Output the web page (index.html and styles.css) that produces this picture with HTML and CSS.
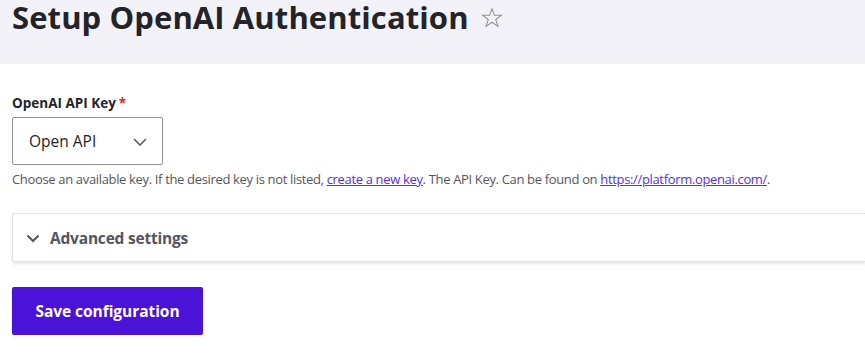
FILE: index.html
```html
<!DOCTYPE html>
<html lang="en">
<head>
<meta charset="utf-8">
<title>Setup OpenAI Authentication</title>
<link rel="stylesheet" href="styles.css">
</head>
<body>
<header class="page-header">
  <h1 class="page-title">Setup OpenAI Authentication <span class="star" aria-hidden="true"><svg width="22" height="22" viewBox="0 0 24 24"><path d="M12 1.8l2.6 7.3h7.7l-6.2 4.6 2.3 7.4L12 16.6l-6.4 4.5 2.3-7.4-6.2-4.6h7.7z" fill="none" stroke="#8d8d95" stroke-width="1.1" stroke-linejoin="miter"/></svg></span></h1>
</header>
<main class="content">
  <form class="form">
    <div class="form-item">
      <label class="form-label">OpenAI API Key<span class="required">*</span></label>
      <div class="select">
        <span class="select-value">Open API</span>
        <svg class="select-chevron" width="14" height="8" viewBox="0 0 14 8"><path d="M1 1l6 6 6-6" fill="none" stroke="#545560" stroke-width="1.5"/></svg>
      </div>
      <div class="description">Choose an available key. If the desired key is not listed, <a href="#">create a new key</a>. The API Key. Can be found on <a href="#">https://platform.openai.com/</a>.</div>
    </div>
    <details class="details">
      <summary class="summary"><svg class="summary-chevron" width="14" height="9" viewBox="0 0 14 9"><path d="M1.5 1.5l5.5 5.5 5.5-5.5" fill="none" stroke="#545560" stroke-width="2"/></svg>Advanced settings</summary>
    </details>
    <div class="actions">
      <button type="button" class="button">Save configuration</button>
    </div>
  </form>
</main>
</body>
</html>
```
FILE: styles.css
```css
html, body {
  margin: 0;
  padding: 0;
  background: #ffffff;
  font-family: "Open Sans", "Noto Sans", sans-serif;
  color: #222330;
}
.page-header {
  background: #f4f2f9;
  height: 64px;
  padding: 0 12px;
  box-sizing: border-box;
}
.page-title {
  margin: 0;
  font-size: 31px;
  line-height: 34px;
  font-weight: 700;
  letter-spacing: 0.1px;
  color: #232429;
  display: flex;
  align-items: center;
  gap: 12px;
}
.star {
  display: flex;
  align-items: center;
  margin-top: 1px;
}
.content {
  padding: 30px 0 0 12px;
}
.form-item {
  display: flex;
  flex-direction: column;
  align-items: flex-start;
}
.form-label {
  font-size: 13.5px;
  font-weight: 700;
  line-height: 18px;
  color: #232429;
  letter-spacing: 0px;
  margin-bottom: 5px;
}
.required {
  color: #dc2323;
  margin-left: 3px;
}
.select {
  box-sizing: border-box;
  width: 151px;
  height: 48px;
  border: 1px solid #8e929c;
  border-radius: 2px;
  display: flex;
  align-items: center;
  justify-content: space-between;
  padding: 0 15px 0 16px;
}
.select-value {
  font-size: 15.5px;
  color: #232429;
  letter-spacing: 0px;
}
.select-chevron {
  margin-top: 2px;
}
.description {
  margin-top: 6px;
  font-size: 13px;
  line-height: 17px;
  color: #55565b;
  letter-spacing: -0.34px;
}
.description a {
  color: #5b2ee0;
  text-decoration: underline;
}
.details {
  margin-top: 25px;
  border: 1px solid #e2e0ea;
  border-right: none;
  border-radius: 2px 0 0 2px;
  box-shadow: 0 2px 3px rgba(0, 0, 0, 0.1);
  height: 49px;
  box-sizing: border-box;
}
.summary {
  list-style: none;
  display: flex;
  align-items: center;
  gap: 10px;
  height: 47px;
  padding-left: 13px;
  font-size: 15.5px;
  font-weight: 700;
  color: #545560;
  letter-spacing: -0.2px;
  cursor: pointer;
}
.summary::-webkit-details-marker {
  display: none;
}
.summary-chevron {
  margin-top: 1px;
}
.actions {
  margin-top: 25px;
}
.button {
  box-sizing: border-box;
  width: 191px;
  height: 48px;
  border: none;
  border-radius: 2px;
  background: #4b12d8;
  color: #ffffff;
  font-family: "Open Sans", "Noto Sans", sans-serif;
  font-size: 15.5px;
  font-weight: 700;
  letter-spacing: -0.05px;
  box-shadow: 0 1px 2px rgba(0, 0, 0, 0.15);
  cursor: pointer;
}
```
